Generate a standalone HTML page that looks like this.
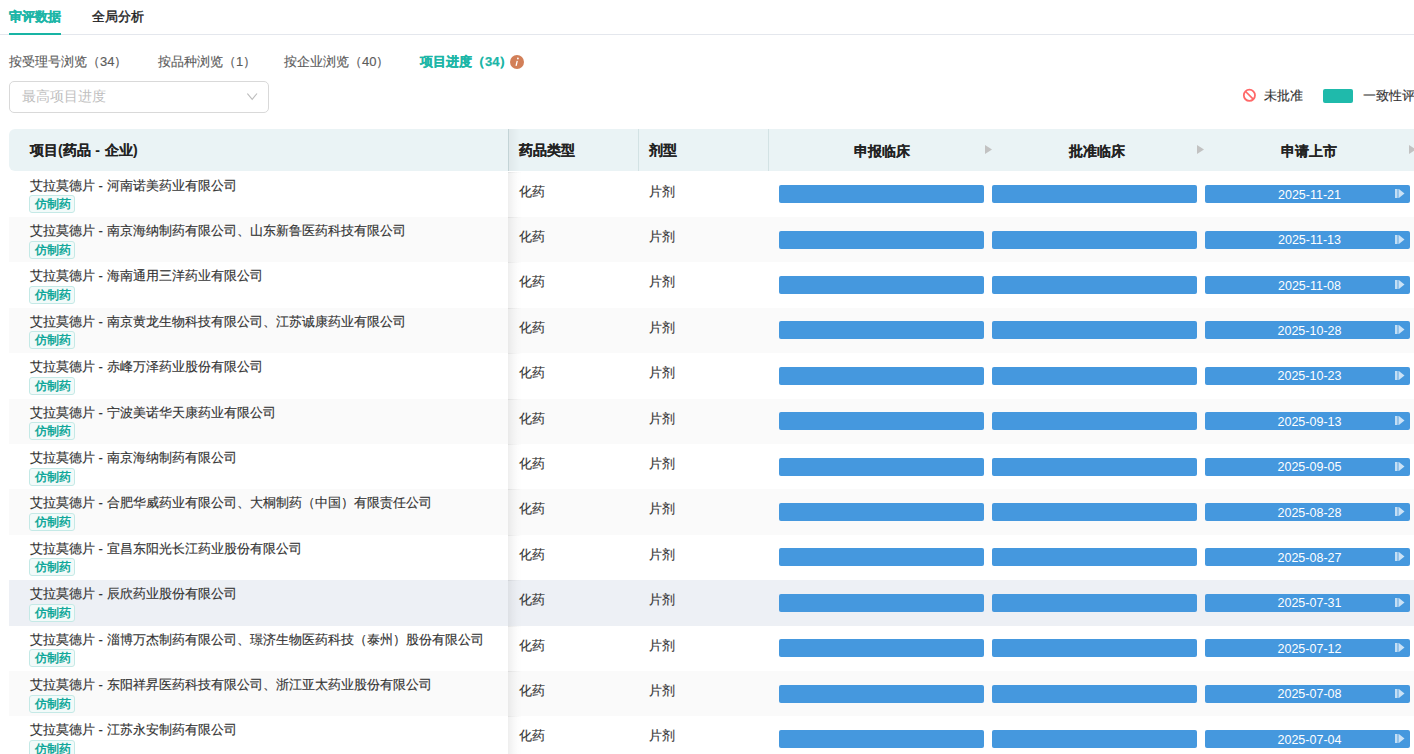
<!DOCTYPE html>
<html><head><meta charset="utf-8"><style>
*{box-sizing:border-box;margin:0;padding:0}
html,body{width:1414px;height:754px;overflow:hidden;background:#fff;font-family:"Liberation Sans",sans-serif;color:#333}
body{position:relative}
.tabs{position:absolute;left:0;top:0;width:1414px;height:36px}
.t1,.t2{position:absolute;top:7px;font-size:13px;line-height:20px;font-weight:bold}
.t1{left:9px;color:#1cb6a7;-webkit-text-stroke:.25px #1cb6a7}
.t2{left:92px;color:#222;font-weight:normal;-webkit-text-stroke:.4px #222}
.tline{position:absolute;left:0;top:34px;width:1414px;height:1px;background:#e4e7ed}
.tul{position:absolute;left:9px;top:33px;width:52px;height:2px;background:#18b4a4}
.sub{position:absolute;top:52px;font-size:13px;line-height:20px;color:#5c5c5c;-webkit-text-stroke:.15px}
.s1{left:9px}.s2{left:158px}.s3{left:284px}.s4{left:420px;color:#1cb6a7;font-weight:bold;-webkit-text-stroke:.25px #1cb6a7}
.info{position:absolute;left:510px;top:55px}
.sep2{letter-spacing:.6px}
.sel{position:absolute;left:9px;top:81px;width:260px;height:32px;border:1px solid #d9d9d9;border-radius:5px}
.sel span{position:absolute;left:12px;top:5px;font-size:14px;line-height:18px;color:#bfbfbf}
.chev{position:absolute;left:237px;top:11px}
.ban{position:absolute;left:1242px;top:88px}
.lg1{position:absolute;left:1264px;top:86px;font-size:13px;line-height:20px;color:#333;-webkit-text-stroke:.15px}
.lgr{position:absolute;left:1323px;top:89px;width:30px;height:14px;border-radius:2px;background:#1fbaab}
.lg2{position:absolute;left:1363px;top:86px;font-size:13px;line-height:20px;color:#333;white-space:nowrap;-webkit-text-stroke:.15px}
.thead{position:absolute;left:9px;top:129px;width:1405px;height:42px;background:#eaf3f5;border-radius:6px 0 0 6px}
.thead>div{position:absolute}
.h1,.h2,.h3,.hg{top:11px;font-size:14px;line-height:20px;font-weight:bold;color:#222;-webkit-text-stroke:.08px}
.h1{left:21px}.h2{left:510px}.h3{left:640px}
.hg{width:205px;text-align:center;top:12px}
.g1{left:770px}.g2{left:985.5px}.g3{left:1197px}
.hsh{left:499px;top:0;width:12px;height:42px;background:linear-gradient(to right,#c3d3d6 0,#c3d3d6 1px,rgba(0,0,0,.045) 1px,rgba(0,0,0,0) 12px)}
.thead::before,.thead::after{content:"";position:absolute;top:0;width:1px;height:42px;background:#d3e2e4}
.thead::before{left:629px}.thead::after{left:759px}
.tri{position:absolute;top:16px}
.row{position:absolute;left:9px;width:1405px;height:45.4px;background:#fff}
.row.alt{background:#fafafa}
.row.hov{background:#edf0f5}
.row>div{position:absolute}
.c1{left:20px;top:4px}
.c1 .nm{margin-left:.6px}
.sep{letter-spacing:.2px}
.c1 .tag{margin-top:0}
.nm{font-size:13px;line-height:19.6px;color:#333;-webkit-text-stroke:.15px;white-space:nowrap}
.tag{display:inline-block;margin-top:0px;height:18px;padding:0 0 0 4.6px;width:46px;white-space:nowrap;border:1px solid #c4e9e6;background:#f2faf9;border-radius:3px;font-size:12px;line-height:17px;color:#13a89a;font-weight:bold;vertical-align:top}
.sh{left:499px;top:0;width:14px;height:100%;background:linear-gradient(to right,rgba(0,0,0,.065),rgba(0,0,0,.03) 35%,rgba(0,0,0,.008) 70%,rgba(0,0,0,0))}
.sh::before{content:"";position:absolute;left:0;top:0;width:14px;height:1px;background:linear-gradient(to right,rgba(0,0,0,.06),rgba(0,0,0,0))}
.c2,.c3{top:10px;font-size:13px;line-height:20px;color:#333;-webkit-text-stroke:.15px}
.c2{left:510px}.c3{left:640px}
.bar{top:13.7px;height:18px;width:205px;border-radius:2px;background:#4598de}
.b1{left:770px}.b2{left:983px}.b3{left:1196px}
.dt{position:absolute;left:2px;width:100%;top:2.5px;text-align:center;color:#fff;font-size:12.5px;line-height:14px}
.ic{position:absolute;left:190px;top:4px}

</style></head><body>
<div class="tabs"><span class="t1">审评数据</span><span class="t2">全局分析</span><div class="tline"></div><div class="tul"></div></div>
<div class="sub s1">按受理号浏览（34）</div>
<div class="sub s2">按品种浏览（1）</div>
<div class="sub s3">按企业浏览（40）</div>
<div class="sub s4">项目进度（34）</div>
<svg class="info" width="14" height="14" viewBox="0 0 14 14"><circle cx="7" cy="7" r="7" fill="#d27f58"/><circle cx="7.9" cy="3.5" r=".9" fill="#fff"/><path d="M7.25 5.8 L6.05 10.9" stroke="#fff" stroke-width="1.3"/></svg>
<div class="sel"><span>最高项目进度</span><svg class="chev" width="11" height="8" viewBox="0 0 11 8"><path d="M0.4 0.5 L5.2 6.4 L10 0.5" fill="none" stroke="#bdbdbd" stroke-width="1.1"/></svg></div>
<svg class="ban" width="14" height="14" viewBox="0 0 14 14"><circle cx="7.4" cy="7.3" r="5.6" fill="none" stroke="#ff6868" stroke-width="1.8"/><path d="M3.6 3.5 L11.2 11.1" stroke="#ff6868" stroke-width="1.7"/></svg>
<div class="lg1">未批准</div>
<div class="lgr"></div>
<div class="lg2">一致性评价</div>
<div class="thead">
 <div class="h1">项目(药品<span class="sep2"> - </span>企业)</div>
 <div class="hsh"></div>
 <div class="h2">药品类型</div><div class="h3">剂型</div>
 <div class="hg g1">申报临床</div><div class="hg g2">批准临床</div><div class="hg g3">申请上市</div>
 <svg class="tri" style="left:976px" width="7" height="9" viewBox="0 0 7 9"><path d="M0 0 L7 4.5 L0 9 Z" fill="#c2c2c2"/></svg><svg class="tri" style="left:1188px" width="7" height="9" viewBox="0 0 7 9"><path d="M0 0 L7 4.5 L0 9 Z" fill="#c2c2c2"/></svg><svg class="tri" style="left:1400px" width="7" height="9" viewBox="0 0 7 9"><path d="M0 0 L7 4.5 L0 9 Z" fill="#c2c2c2"/></svg>
</div>
<div class="row" style="top:171.60px"><div class="c1"><div class="nm">艾拉莫德片<span class="sep"> - </span>河南诺美药业有限公司</div><span class="tag">仿制药</span></div><div class="sh"></div><div class="c2">化药</div><div class="c3">片剂</div><div class="bar b1"></div><div class="bar b2"></div><div class="bar b3"><span class="dt">2025-11-21</span><svg class="ic" width="10" height="9" viewBox="0 0 10 9"><rect x="0" y="0" width="2" height="9" fill="rgba(255,255,255,.68)"/><rect x="2" y="0" width="1.9" height="9" fill="rgba(255,255,255,.4)"/><path d="M3.9 0 L9.5 4.4 L3.9 9 Z" fill="rgba(255,255,255,.72)"/></svg></div></div><div class="row alt" style="top:217.00px"><div class="c1"><div class="nm">艾拉莫德片<span class="sep"> - </span>南京海纳制药有限公司、山东新鲁医药科技有限公司</div><span class="tag">仿制药</span></div><div class="sh"></div><div class="c2">化药</div><div class="c3">片剂</div><div class="bar b1"></div><div class="bar b2"></div><div class="bar b3"><span class="dt">2025-11-13</span><svg class="ic" width="10" height="9" viewBox="0 0 10 9"><rect x="0" y="0" width="2" height="9" fill="rgba(255,255,255,.68)"/><rect x="2" y="0" width="1.9" height="9" fill="rgba(255,255,255,.4)"/><path d="M3.9 0 L9.5 4.4 L3.9 9 Z" fill="rgba(255,255,255,.72)"/></svg></div></div><div class="row" style="top:262.40px"><div class="c1"><div class="nm">艾拉莫德片<span class="sep"> - </span>海南通用三洋药业有限公司</div><span class="tag">仿制药</span></div><div class="sh"></div><div class="c2">化药</div><div class="c3">片剂</div><div class="bar b1"></div><div class="bar b2"></div><div class="bar b3"><span class="dt">2025-11-08</span><svg class="ic" width="10" height="9" viewBox="0 0 10 9"><rect x="0" y="0" width="2" height="9" fill="rgba(255,255,255,.68)"/><rect x="2" y="0" width="1.9" height="9" fill="rgba(255,255,255,.4)"/><path d="M3.9 0 L9.5 4.4 L3.9 9 Z" fill="rgba(255,255,255,.72)"/></svg></div></div><div class="row alt" style="top:307.80px"><div class="c1"><div class="nm">艾拉莫德片<span class="sep"> - </span>南京黄龙生物科技有限公司、江苏诚康药业有限公司</div><span class="tag">仿制药</span></div><div class="sh"></div><div class="c2">化药</div><div class="c3">片剂</div><div class="bar b1"></div><div class="bar b2"></div><div class="bar b3"><span class="dt">2025-10-28</span><svg class="ic" width="10" height="9" viewBox="0 0 10 9"><rect x="0" y="0" width="2" height="9" fill="rgba(255,255,255,.68)"/><rect x="2" y="0" width="1.9" height="9" fill="rgba(255,255,255,.4)"/><path d="M3.9 0 L9.5 4.4 L3.9 9 Z" fill="rgba(255,255,255,.72)"/></svg></div></div><div class="row" style="top:353.20px"><div class="c1"><div class="nm">艾拉莫德片<span class="sep"> - </span>赤峰万泽药业股份有限公司</div><span class="tag">仿制药</span></div><div class="sh"></div><div class="c2">化药</div><div class="c3">片剂</div><div class="bar b1"></div><div class="bar b2"></div><div class="bar b3"><span class="dt">2025-10-23</span><svg class="ic" width="10" height="9" viewBox="0 0 10 9"><rect x="0" y="0" width="2" height="9" fill="rgba(255,255,255,.68)"/><rect x="2" y="0" width="1.9" height="9" fill="rgba(255,255,255,.4)"/><path d="M3.9 0 L9.5 4.4 L3.9 9 Z" fill="rgba(255,255,255,.72)"/></svg></div></div><div class="row alt" style="top:398.60px"><div class="c1"><div class="nm">艾拉莫德片<span class="sep"> - </span>宁波美诺华天康药业有限公司</div><span class="tag">仿制药</span></div><div class="sh"></div><div class="c2">化药</div><div class="c3">片剂</div><div class="bar b1"></div><div class="bar b2"></div><div class="bar b3"><span class="dt">2025-09-13</span><svg class="ic" width="10" height="9" viewBox="0 0 10 9"><rect x="0" y="0" width="2" height="9" fill="rgba(255,255,255,.68)"/><rect x="2" y="0" width="1.9" height="9" fill="rgba(255,255,255,.4)"/><path d="M3.9 0 L9.5 4.4 L3.9 9 Z" fill="rgba(255,255,255,.72)"/></svg></div></div><div class="row" style="top:444.00px"><div class="c1"><div class="nm">艾拉莫德片<span class="sep"> - </span>南京海纳制药有限公司</div><span class="tag">仿制药</span></div><div class="sh"></div><div class="c2">化药</div><div class="c3">片剂</div><div class="bar b1"></div><div class="bar b2"></div><div class="bar b3"><span class="dt">2025-09-05</span><svg class="ic" width="10" height="9" viewBox="0 0 10 9"><rect x="0" y="0" width="2" height="9" fill="rgba(255,255,255,.68)"/><rect x="2" y="0" width="1.9" height="9" fill="rgba(255,255,255,.4)"/><path d="M3.9 0 L9.5 4.4 L3.9 9 Z" fill="rgba(255,255,255,.72)"/></svg></div></div><div class="row alt" style="top:489.40px"><div class="c1"><div class="nm">艾拉莫德片<span class="sep"> - </span>合肥华威药业有限公司、大桐制药（中国）有限责任公司</div><span class="tag">仿制药</span></div><div class="sh"></div><div class="c2">化药</div><div class="c3">片剂</div><div class="bar b1"></div><div class="bar b2"></div><div class="bar b3"><span class="dt">2025-08-28</span><svg class="ic" width="10" height="9" viewBox="0 0 10 9"><rect x="0" y="0" width="2" height="9" fill="rgba(255,255,255,.68)"/><rect x="2" y="0" width="1.9" height="9" fill="rgba(255,255,255,.4)"/><path d="M3.9 0 L9.5 4.4 L3.9 9 Z" fill="rgba(255,255,255,.72)"/></svg></div></div><div class="row" style="top:534.80px"><div class="c1"><div class="nm">艾拉莫德片<span class="sep"> - </span>宜昌东阳光长江药业股份有限公司</div><span class="tag">仿制药</span></div><div class="sh"></div><div class="c2">化药</div><div class="c3">片剂</div><div class="bar b1"></div><div class="bar b2"></div><div class="bar b3"><span class="dt">2025-08-27</span><svg class="ic" width="10" height="9" viewBox="0 0 10 9"><rect x="0" y="0" width="2" height="9" fill="rgba(255,255,255,.68)"/><rect x="2" y="0" width="1.9" height="9" fill="rgba(255,255,255,.4)"/><path d="M3.9 0 L9.5 4.4 L3.9 9 Z" fill="rgba(255,255,255,.72)"/></svg></div></div><div class="row alt hov" style="top:580.20px"><div class="c1"><div class="nm">艾拉莫德片<span class="sep"> - </span>辰欣药业股份有限公司</div><span class="tag">仿制药</span></div><div class="sh"></div><div class="c2">化药</div><div class="c3">片剂</div><div class="bar b1"></div><div class="bar b2"></div><div class="bar b3"><span class="dt">2025-07-31</span><svg class="ic" width="10" height="9" viewBox="0 0 10 9"><rect x="0" y="0" width="2" height="9" fill="rgba(255,255,255,.68)"/><rect x="2" y="0" width="1.9" height="9" fill="rgba(255,255,255,.4)"/><path d="M3.9 0 L9.5 4.4 L3.9 9 Z" fill="rgba(255,255,255,.72)"/></svg></div></div><div class="row" style="top:625.60px"><div class="c1"><div class="nm">艾拉莫德片<span class="sep"> - </span>淄博万杰制药有限公司、璟济生物医药科技（泰州）股份有限公司</div><span class="tag">仿制药</span></div><div class="sh"></div><div class="c2">化药</div><div class="c3">片剂</div><div class="bar b1"></div><div class="bar b2"></div><div class="bar b3"><span class="dt">2025-07-12</span><svg class="ic" width="10" height="9" viewBox="0 0 10 9"><rect x="0" y="0" width="2" height="9" fill="rgba(255,255,255,.68)"/><rect x="2" y="0" width="1.9" height="9" fill="rgba(255,255,255,.4)"/><path d="M3.9 0 L9.5 4.4 L3.9 9 Z" fill="rgba(255,255,255,.72)"/></svg></div></div><div class="row alt" style="top:671.00px"><div class="c1"><div class="nm">艾拉莫德片<span class="sep"> - </span>东阳祥昇医药科技有限公司、浙江亚太药业股份有限公司</div><span class="tag">仿制药</span></div><div class="sh"></div><div class="c2">化药</div><div class="c3">片剂</div><div class="bar b1"></div><div class="bar b2"></div><div class="bar b3"><span class="dt">2025-07-08</span><svg class="ic" width="10" height="9" viewBox="0 0 10 9"><rect x="0" y="0" width="2" height="9" fill="rgba(255,255,255,.68)"/><rect x="2" y="0" width="1.9" height="9" fill="rgba(255,255,255,.4)"/><path d="M3.9 0 L9.5 4.4 L3.9 9 Z" fill="rgba(255,255,255,.72)"/></svg></div></div><div class="row" style="top:716.40px"><div class="c1"><div class="nm">艾拉莫德片<span class="sep"> - </span>江苏永安制药有限公司</div><span class="tag">仿制药</span></div><div class="sh"></div><div class="c2">化药</div><div class="c3">片剂</div><div class="bar b1"></div><div class="bar b2"></div><div class="bar b3"><span class="dt">2025-07-04</span><svg class="ic" width="10" height="9" viewBox="0 0 10 9"><rect x="0" y="0" width="2" height="9" fill="rgba(255,255,255,.68)"/><rect x="2" y="0" width="1.9" height="9" fill="rgba(255,255,255,.4)"/><path d="M3.9 0 L9.5 4.4 L3.9 9 Z" fill="rgba(255,255,255,.72)"/></svg></div></div>
</body></html>
